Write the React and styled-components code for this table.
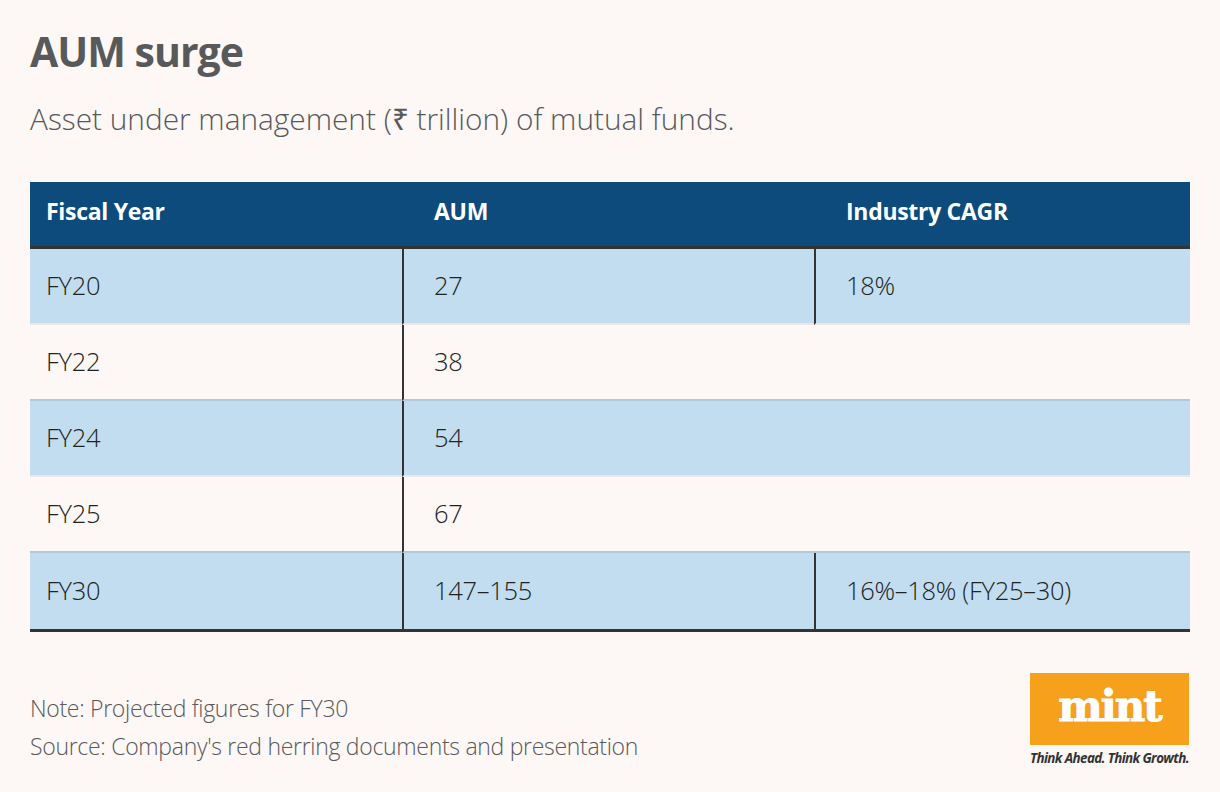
import React from "react";
import styled, { createGlobalStyle } from "styled-components";

const Global = createGlobalStyle`
  html, body { margin: 0; padding: 0; background: #fdf7f6; }
  body { font-family: "Open Sans", "Noto Sans", sans-serif; }
`;

const Page = styled.div`
  width: 1220px;
  height: 792px;
  box-sizing: border-box;
  padding: 27px 30px 0 30px;
  display: flex;
  flex-direction: column;
  background: #fdf7f6;
`;

const Title = styled.h1`
  margin: 0;
  font-family: "Open Sans", sans-serif;
  font-weight: 700;
  font-size: 41px;
  line-height: 48px;
  letter-spacing: -1px;
  color: #58595b;
`;

const Subtitle = styled.p`
  margin: 24px 0 0 0;
  font-family: "Open Sans", sans-serif;
  font-weight: 300;
  font-size: 29.8px;
  line-height: 40px;
  color: #58595b;
`;

const Table = styled.div`
  margin-top: 43px;
  display: grid;
  grid-template-columns: 372px 412px 1fr;
  border-bottom: 3px solid #333;
`;

const HeadCell = styled.div`
  background: #0c4b7b;
  height: 67px;
  display: flex;
  align-items: center;
  padding-left: ${(p) => (p.$first ? "16px" : "32px")};
  padding-bottom: 6px;
  box-sizing: border-box;
  color: #fff;
  font-weight: 700;
  font-size: 23px;
  letter-spacing: -0.3px;
  border-bottom: 3px solid #333;
`;

const Cell = styled.div`
  height: 76px;
  box-sizing: border-box;
  display: flex;
  align-items: center;
  padding-left: ${(p) => (p.$first ? "16px" : p.$divider ? "30px" : "32px")};
  padding-bottom: 3px;
  background: ${(p) => (p.$shade ? "#c1ddef" : "#fdf7f6")};
  border-left: ${(p) => (p.$divider ? "2px solid #333" : "none")};
  border-bottom: ${(p) =>
    p.$last ? "none" : p.$shade ? "2px solid #ede6e6" : "2px solid #aecbdd"};
  font-weight: 300;
  font-size: 25.5px;
  color: #222;
  letter-spacing: -0.3px;
`;

const Footer = styled.div`
  margin-top: 41px;
  display: flex;
  justify-content: space-between;
  align-items: flex-start;
`;

const Notes = styled.div`
  display: flex;
  flex-direction: column;
  gap: 8px;
  padding-top: 20px;
`;

const Note = styled.div`
  font-weight: 300;
  font-size: 23px;
  line-height: 30px;
  color: #58595b;
  letter-spacing: -0.3px;
`;

const Logo = styled.div`
  display: flex;
  flex-direction: column;
  align-items: flex-start;
  margin-right: 1px;
`;

const LogoBox = styled.div`
  width: 159px;
  height: 72px;
  background: #f7a01c;
  display: flex;
  align-items: center;
  justify-content: center;
  color: #fff;
  font-family: "DejaVu Serif", serif;
  font-weight: 700;
  font-size: 42px;
  letter-spacing: -2px;
  padding-bottom: 6px;
  box-sizing: border-box;
  -webkit-text-stroke: 1px #fff;
`;

const Tagline = styled.div`
  margin-top: 4px;
  font-family: "Open Sans", sans-serif;
  font-style: italic;
  font-weight: 700;
  font-size: 13.4px;
  letter-spacing: -0.6px;
  color: #333;
  white-space: nowrap;
`;

const rows = [
  ["FY20", "27", "18%"],
  ["FY22", "38", ""],
  ["FY24", "54", ""],
  ["FY25", "67", ""],
  ["FY30", "147–155", "16%–18% (FY25–30)"],
];

export default function App() {
  return (
    <>
      <Global />
      <Page>
        <Title>AUM surge</Title>
        <Subtitle>Asset under management (₹ trillion) of mutual funds.</Subtitle>
        <Table>
          <HeadCell $first>Fiscal Year</HeadCell>
          <HeadCell>AUM</HeadCell>
          <HeadCell>Industry CAGR</HeadCell>
          {rows.map((r, i) => {
            const shade = i % 2 === 0;
            const last = i === rows.length - 1;
            return (
              <React.Fragment key={r[0]}>
                <Cell $first $shade={shade} $last={last}>{r[0]}</Cell>
                <Cell $divider $shade={shade} $last={last}>{r[1]}</Cell>
                <Cell $divider={!!r[2]} $shade={shade} $last={last}>{r[2]}</Cell>
              </React.Fragment>
            );
          })}
        </Table>
        <Footer>
          <Notes>
            <Note>Note: Projected figures for FY30</Note>
            <Note>Source: Company's red herring documents and presentation</Note>
          </Notes>
          <Logo>
            <LogoBox>mint</LogoBox>
            <Tagline>Think Ahead. Think Growth.</Tagline>
          </Logo>
        </Footer>
      </Page>
    </>
  );
}
